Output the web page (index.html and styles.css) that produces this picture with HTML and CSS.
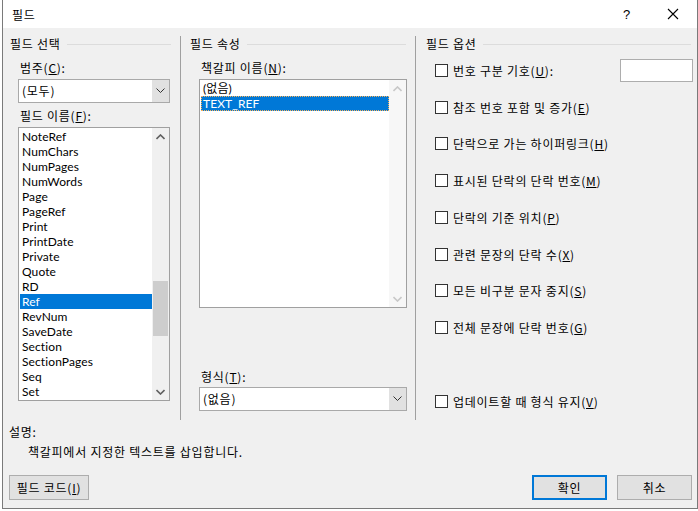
FILE: index.html
```html
<!DOCTYPE html>
<html>
  <head>
    <title>필드</title>
    <link rel="stylesheet" href="styles.css">
  </head>
  <body>

    <div class="dialog">

      <div class="titlebar">
        <span class="title">필드</span>
        <span class="help">?</span>
        <span class="close">
          <svg width="12" height="12" viewBox="0 0 12 12"><path d="M1 1 L11 11 M11 1 L1 11" stroke="#000" stroke-width="1.1" fill="none"/></svg>
        </span>
      </div>

      <div class="body">

        <div class="columns">

          <!-- Field select -->
          <section class="col col-select">
            <div class="group-head"><span>필드 선택</span></div>
            <div class="label">범주(<u>C</u>):</div>
            <div class="combo">
              <span class="combo-text">(모두)</span>
              <span class="combo-btn"><svg width="9" height="6" viewBox="0 0 9 6"><path d="M0.5 0.5 L4.5 4.5 L8.5 0.5" stroke="#333" fill="none"/></svg></span>
            </div>
            <div class="label">필드 이름(<u>F</u>):</div>
            <div class="listbox names">
              <ul class="items">
                <li>NoteRef</li>
                <li>NumChars</li>
                <li>NumPages</li>
                <li>NumWords</li>
                <li>Page</li>
                <li>PageRef</li>
                <li>Print</li>
                <li>PrintDate</li>
                <li>Private</li>
                <li>Quote</li>
                <li>RD</li>
                <li class="selected">Ref</li>
                <li>RevNum</li>
                <li>SaveDate</li>
                <li>Section</li>
                <li>SectionPages</li>
                <li>Seq</li>
                <li>Set</li>
              </ul>
              <div class="scrollbar">
                <span class="arrow"><svg width="9" height="6" viewBox="0 0 9 6"><path d="M0.5 5 L4.5 1 L8.5 5" stroke="#606060" stroke-width="1.6" fill="none"/></svg></span>
                <div class="track"><div class="thumb"></div></div>
                <span class="arrow"><svg width="9" height="6" viewBox="0 0 9 6"><path d="M0.5 1 L4.5 5 L8.5 1" stroke="#606060" stroke-width="1.6" fill="none"/></svg></span>
              </div>
            </div>
          </section>

          <!-- Field properties -->
          <section class="col col-props">
            <div class="group-head"><span>필드 속성</span></div>
            <div class="label">책갈피 이름(<u>N</u>):</div>
            <div class="listbox bookmarks">
              <ul class="items">
                <li>(없음)</li>
                <li class="selected focus">TEXT_REF</li>
              </ul>
              <div class="scrollbar disabled">
                <span class="arrow"><svg width="9" height="6" viewBox="0 0 9 6"><path d="M0.5 5 L4.5 1 L8.5 5" stroke="#c8c8c8" stroke-width="1.6" fill="none"/></svg></span>
                <div class="track"></div>
                <span class="arrow"><svg width="9" height="6" viewBox="0 0 9 6"><path d="M0.5 1 L4.5 5 L8.5 1" stroke="#c8c8c8" stroke-width="1.6" fill="none"/></svg></span>
              </div>
            </div>
            <div class="label format-label">형식(<u>T</u>):</div>
            <div class="combo">
              <span class="combo-text">(없음)</span>
              <span class="combo-btn"><svg width="9" height="6" viewBox="0 0 9 6"><path d="M0.5 0.5 L4.5 4.5 L8.5 0.5" stroke="#333" fill="none"/></svg></span>
            </div>
          </section>

          <!-- Field options -->
          <section class="col col-options">
            <div class="group-head"><span>필드 옵션</span></div>
            <div class="check-row">
              <span class="box"></span><span>번호 구분 기호(<u>U</u>):</span>
              <span class="textbox"></span>
            </div>
            <div class="check-row"><span class="box"></span><span>참조 번호 포함 및 증가(<u>E</u>)</span></div>
            <div class="check-row"><span class="box"></span><span>단락으로 가는 하이퍼링크(<u>H</u>)</span></div>
            <div class="check-row"><span class="box"></span><span>표시된 단락의 단락 번호(<u>M</u>)</span></div>
            <div class="check-row"><span class="box"></span><span>단락의 기준 위치(<u>P</u>)</span></div>
            <div class="check-row"><span class="box"></span><span>관련 문장의 단락 수(<u>X</u>)</span></div>
            <div class="check-row"><span class="box"></span><span>모든 비구분 문자 중지(<u>S</u>)</span></div>
            <div class="check-row"><span class="box"></span><span>전체 문장에 단락 번호(<u>G</u>)</span></div>
            <div class="check-row keep-format"><span class="box"></span><span>업데이트할 때 형식 유지(<u>V</u>)</span></div>
          </section>

        </div>

        <div class="desc">
          <div class="desc-label">설명:</div>
          <div class="desc-text">책갈피에서 지정한 텍스트를 삽입합니다.</div>
        </div>

        <div class="footer">
          <button class="btn">필드 코드(<u>I</u>)</button>
          <span class="spacer"></span>
          <button class="btn default">확인</button>
          <button class="btn">취소</button>
        </div>

      </div>
    </div>

  </body>
</html>
```

FILE: styles.css
```css
html, body {
  margin: 0;
  padding: 0;
  background: #fff;
}

body {
  font-family: "Noto Sans CJK KR", "Noto Sans", sans-serif;
  font-size: 12px;
  letter-spacing: 0.75px;
  color: #000;
}

u {
  text-decoration: underline;
  text-underline-offset: 1px;
}

.dialog {
  margin-left: 2px;
  width: 696px;
  height: 509px;
  box-sizing: border-box;
  border: 1px solid #7a7a7a;
  border-top: none;
  display: flex;
  flex-direction: column;
}

/* Title bar */

.titlebar {
  height: 28px;
  background: #fff;
  display: flex;
  align-items: center;
  padding-left: 9px;
}

.title {
  flex: 1;
  font-size: 12px;
}

.help {
  width: 20px;
  text-align: center;
  font-family: "Liberation Sans", sans-serif;
  font-size: 13px;
  margin-right: 26px;
}

.close {
  width: 20px;
  display: flex;
  justify-content: center;
  margin-right: 14px;
}

/* Body */

.body {
  flex: 1;
  background: #f0f0f0;
  padding-top: 8px;
  display: flex;
  flex-direction: column;
}

.columns {
  display: grid;
  grid-template-columns: 178px 235px 1fr;
  height: 381px;
}

.col {
  box-sizing: border-box;
  display: flex;
  flex-direction: column;
  align-items: flex-start;
}

.col-select,
.col-props {
  border-right: 1px solid #a0a0a0;
}

.col-select { padding-left: 15px; }
.col-props { padding-left: 18px; }
.col-options { padding-left: 19px; }

.group-head {
  display: flex;
  align-items: center;
  height: 16px;
  line-height: 16px;
  align-self: stretch;
}

.group-head::after {
  content: "";
  flex: 1;
  height: 1px;
  background: #dcdcdc;
  margin-left: 6px;
}

.col-select .group-head { margin-left: -8px; margin-right: 9px; }
.col-props .group-head { margin-left: -9px; margin-right: 9px; }
.col-options .group-head { margin-left: -9px; margin-right: 6px; }

.label {
  line-height: 16px;
  margin-top: 8px;
  margin-left: 2px;
}

.col-select .label + .listbox { margin-top: 3px; }
.col-select .combo + .label { margin-top: 5px; }

/* Combo boxes */

.combo {
  margin-top: 3px;
  box-sizing: border-box;
  height: 24px;
  border: 1px solid #a9a9a9;
  background: #fff;
  display: flex;
  align-items: stretch;
}

.col-select .combo { width: 152px; }
.col-props .combo { width: 208px; margin-top: 2px; }

.combo-text {
  flex: 1;
  line-height: 22px;
  padding-left: 3px;
}

.combo-btn {
  width: 17px;
  background: #e1e1e1;
  display: flex;
  align-items: center;
  justify-content: center;
}

/* List boxes */

.listbox {
  box-sizing: border-box;
  border: 1px solid #a0a0a0;
  background: #fff;
  display: flex;
}

.listbox.names {
  width: 152px;
  height: 274px;
}

.listbox.bookmarks {
  width: 208px;
  height: 229px;
  margin-top: 3px;
}

.items {
  list-style: none;
  margin: 0;
  padding: 0;
  flex: 1;
  font-family: Lato, "Noto Sans CJK KR", sans-serif;
  letter-spacing: 0.1px;
}

.names .items,
.bookmarks .items {
  padding-top: 1px;
}

.items li {
  height: 15px;
  line-height: 15px;
  padding-left: 2px;
  margin-left: 1px;
  white-space: nowrap;
}

.items li.selected {
  background: #0078d7;
  color: #fff;
}

.items li.focus {
  outline: 1px dotted #f7b15a;
  outline-offset: -1px;
}

.scrollbar {
  width: 17px;
  background: #f0f0f0;
  display: flex;
  flex-direction: column;
}

.bookmarks .scrollbar {
  background: #f7f7f7;
}

.scrollbar .arrow {
  height: 17px;
  display: flex;
  align-items: center;
  justify-content: center;
}

.track {
  flex: 1;
}

.thumb {
  margin: 136px 1px 0 1px;
  height: 55px;
  background: #cdcdcd;
}

.format-label {
  margin-top: 61px;
}

/* Check boxes */

.check-row {
  height: 36.75px;
  display: flex;
  align-items: center;
  align-self: stretch;
}

.check-row .box {
  width: 13px;
  height: 13px;
  box-sizing: border-box;
  border: 1px solid #333;
  background: #fff;
  margin-right: 5px;
}

.textbox {
  margin-left: auto;
  margin-right: 4px;
  width: 73px;
  height: 23px;
  box-sizing: border-box;
  border: 1px solid #adadad;
  background: #fff;
}

.keep-format {
  margin-top: 37px;
}

/* Description */

.desc {
  padding-left: 6px;
  margin-top: 7px;
}

.desc-label,
.desc-text {
  line-height: 16px;
}

.desc-text {
  margin-top: 4px;
  padding-left: 19px;
}

/* Buttons */

.footer {
  display: flex;
  margin-top: 15px;
  padding: 0 5px 0 6px;
  gap: 10px;
}

.spacer {
  flex: 1;
}

.btn {
  font: inherit;
  letter-spacing: inherit;
  height: 25px;
  width: 75px;
  padding: 0;
  box-sizing: border-box;
  background: #e1e1e1;
  border: 1px solid #adadad;
  color: #000;
}

.footer .btn:first-child {
  width: 80px;
}

.btn.default {
  border: 2px solid #0078d7;
}
```
